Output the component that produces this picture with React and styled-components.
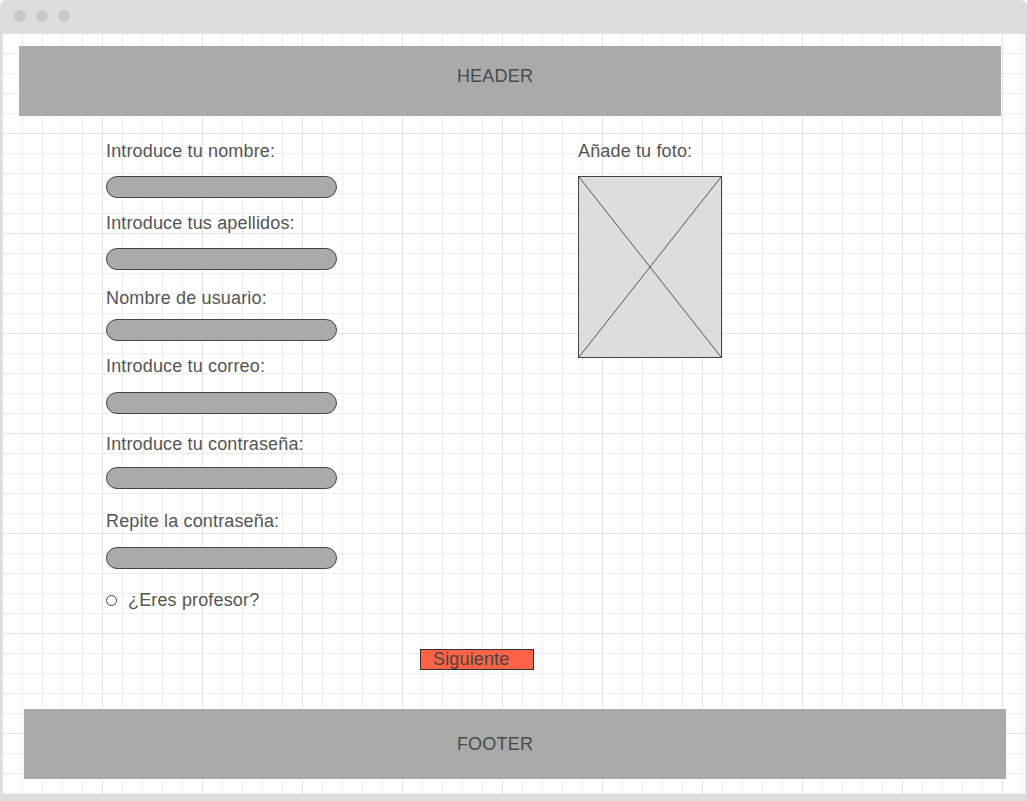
import React from "react";
import styled, { createGlobalStyle } from "styled-components";

const GlobalStyle = createGlobalStyle`
  html, body {
    margin: 0;
    padding: 0;
    background: #ffffff;
  }
  * {
    box-sizing: border-box;
  }
`;

const Frame = styled.div`
  width: 1027px;
  height: 801px;
  display: flex;
  flex-direction: column;
  background: #dddddd;
  border-radius: 6px 6px 0 0;
  overflow: hidden;
  font-family: "Liberation Sans", Arial, sans-serif;
`;

const TitleBar = styled.div`
  height: 33px;
  flex-shrink: 0;
  display: flex;
  align-items: center;
  gap: 10px;
  padding: 0 0 1px 14px;
`;

const Dot = styled.span`
  width: 12px;
  height: 12px;
  border-radius: 50%;
  background: #c8c8c8;
`;

const Canvas = styled.div`
  flex: 1;
  margin: 0 2px 7px 2px;
  background-color: #ffffff;
  background-image:
    linear-gradient(to right, #e2e2e2 1px, transparent 1px),
    linear-gradient(to bottom, #e2e2e2 1px, transparent 1px),
    linear-gradient(to right, #ececec 1px, transparent 1px),
    linear-gradient(to bottom, #ececec 1px, transparent 1px);
  background-size: 100px 100px, 100px 100px, 20px 20px, 20px 20px;
  display: flex;
  flex-direction: column;
`;

const Band = styled.div`
  width: 982px;
  height: 70px;
  margin-left: ${(p) => p.$left}px;
  margin-top: ${(p) => p.$top}px;
  background: #aaaaaa;
  display: flex;
  align-items: center;
  justify-content: center;
  padding-right: ${(p) => p.$shiftX}px;
  padding-bottom: ${(p) => p.$shiftY}px;
  color: #4a4a4a;
  font-size: 18px;
  letter-spacing: 0.2px;
`;

const Main = styled.div`
  display: flex;
  padding-left: 104px;
`;

const LeftColumn = styled.div`
  width: 472px;
  display: flex;
  flex-direction: column;
`;

const RightColumn = styled.div`
  display: flex;
  flex-direction: column;
  padding-top: 25px;
`;

const Label = styled.div`
  height: 20px;
  line-height: 20px;
  font-size: 18px;
  letter-spacing: 0.15px;
  color: #555555;
  margin-top: ${(p) => p.$mt}px;
`;

const Pill = styled.div`
  width: 231px;
  height: 22px;
  margin-top: ${(p) => p.$mt}px;
  border: 1px solid #444444;
  border-radius: 11px;
  background: #aaaaaa;
`;

const CheckRow = styled.div`
  display: flex;
  align-items: center;
  gap: 11px;
  margin-top: 21px;
  height: 20px;
  font-size: 18px;
  letter-spacing: 0.15px;
  color: #555555;
`;

const Radio = styled.span`
  width: 11px;
  height: 11px;
  border: 1px solid #444444;
  border-radius: 50%;
  background: #ffffff;
`;

const Photo = styled.div`
  width: 144px;
  height: 182px;
  margin-top: 15px;
  border: 1px solid #444444;
  background: #dddddd;

  svg {
    display: block;
    width: 100%;
    height: 100%;
  }
`;

const ButtonRow = styled.div`
  margin-top: 39px;
  padding-left: 418px;
`;

const NextButton = styled.button`
  width: 114px;
  height: 21px;
  padding: 0 0 0 12px;
  border: 1px solid #333333;
  border-radius: 0;
  background: #ff6347;
  color: #444444;
  font-family: "Liberation Sans", Arial, sans-serif;
  font-size: 18px;
  letter-spacing: 0.15px;
  line-height: 19px;
  text-align: left;
`;

const fields = [
  { label: "Introduce tu nombre:", labelTop: 25, pillTop: 15 },
  { label: "Introduce tus apellidos:", labelTop: 15, pillTop: 15 },
  { label: "Nombre de usuario:", labelTop: 18, pillTop: 11 },
  { label: "Introduce tu correo:", labelTop: 15, pillTop: 16 },
  { label: "Introduce tu contraseña:", labelTop: 20, pillTop: 13 },
  { label: "Repite la contraseña:", labelTop: 22, pillTop: 16 },
];

export default function App() {
  return (
    <>
      <GlobalStyle />
      <Frame>
        <TitleBar>
          <Dot />
          <Dot />
          <Dot />
        </TitleBar>
        <Canvas>
          <Band $left={17} $top={13} $shiftX={30} $shiftY={10}>HEADER</Band>
          <Main>
            <LeftColumn>
              {fields.map((f) => (
                <React.Fragment key={f.label}>
                  <Label $mt={f.labelTop}>{f.label}</Label>
                  <Pill $mt={f.pillTop} />
                </React.Fragment>
              ))}
              <CheckRow>
                <Radio />
                ¿Eres profesor?
              </CheckRow>
            </LeftColumn>
            <RightColumn>
              <Label $mt={0}>Añade tu foto:</Label>
              <Photo>
                <svg viewBox="0 0 142 180" preserveAspectRatio="none">
                  <line x1="0" y1="0" x2="142" y2="180" stroke="#555" strokeWidth="1" />
                  <line x1="142" y1="0" x2="0" y2="180" stroke="#555" strokeWidth="1" />
                </svg>
              </Photo>
            </RightColumn>
          </Main>
          <ButtonRow>
            <NextButton>Siguiente</NextButton>
          </ButtonRow>
          <Band $left={22} $top={39} $shiftX={40} $shiftY={0}>FOOTER</Band>
        </Canvas>
      </Frame>
    </>
  );
}
